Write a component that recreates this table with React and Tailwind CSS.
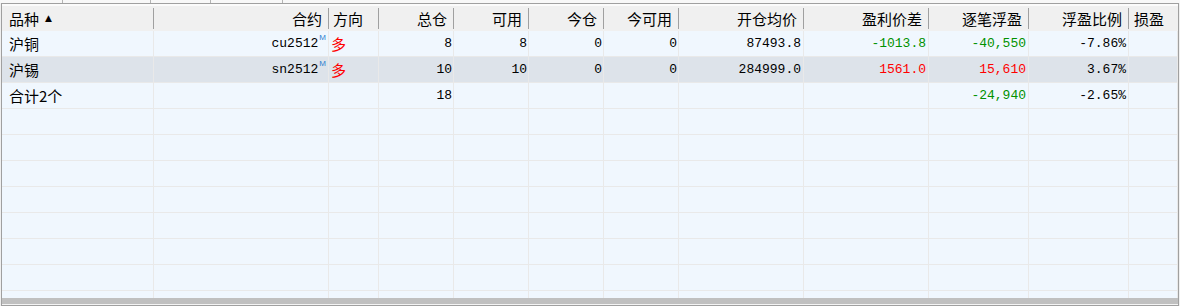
import React from "react";

const cjk = "font-['Microsoft_YaHei','Noto_Sans_CJK_SC',sans-serif]";
const mono = "font-['Liberation_Mono','Noto_Sans_CJK_SC',monospace]";

const cols = [
  { key: "name", label: "品种", w: "w-[152px]", head: "justify-start pl-[7px]", body: "justify-start pl-[7px]" },
  { key: "code", label: "合约", w: "w-[175px]", head: "justify-end pr-[6px]", body: "justify-end pr-[2px]" },
  { key: "dir", label: "方向", w: "w-[50px]", head: "justify-start pl-[4px]", body: "justify-start pl-[2px]" },
  { key: "total", label: "总仓", w: "w-[75px]", head: "justify-end pr-[6px]", body: "justify-end pr-[1px]" },
  { key: "avail", label: "可用", w: "w-[75px]", head: "justify-end pr-[6px]", body: "justify-end pr-[1px]" },
  { key: "today", label: "今仓", w: "w-[75px]", head: "justify-end pr-[6px]", body: "justify-end pr-[1px]" },
  { key: "todayAvail", label: "今可用", w: "w-[75px]", head: "justify-end pr-[6px]", body: "justify-end pr-[1px]" },
  { key: "open", label: "开仓均价", w: "w-[125px]", head: "justify-end pr-[6px]", body: "justify-end pr-[2px]" },
  { key: "diff", label: "盈利价差", w: "w-[125px]", head: "justify-end pr-[6px]", body: "justify-end pr-[2px]" },
  { key: "float", label: "逐笔浮盈", w: "w-[100px]", head: "justify-end pr-[6px]", body: "justify-end pr-[2px]" },
  { key: "ratio", label: "浮盈比例", w: "w-[100px]", head: "justify-end pr-[6px]", body: "justify-end pr-[2px]" },
  { key: "pl", label: "损盈", w: "w-[49px]", head: "justify-start pl-[5px]", body: "justify-start pl-[2px]" },
];

const green = "text-[#009100]";
const red = "text-[#ff0000]";

function Contract({ code }) {
  return (
    <span className="flex items-start">
      <span className={`${mono} text-[13px]`}>{code}</span>
      <span className="font-['Liberation_Sans',sans-serif] text-[8px] leading-none text-[#2f7fd0] -mt-[3px] ml-[1px]">M</span>
    </span>
  );
}

const rows = [
  {
    bg: "bg-[#f0f7fe]",
    cells: {
      name: <span className={`${cjk} text-[15px]`}>沪铜</span>,
      code: <Contract code="cu2512" />,
      dir: <span className={`${cjk} text-[15px] ${red}`}>多</span>,
      total: "8",
      avail: "8",
      today: "0",
      todayAvail: "0",
      open: "87493.8",
      diff: <span className={green}>-1013.8</span>,
      float: <span className={green}>-40,550</span>,
      ratio: "-7.86%",
    },
  },
  {
    bg: "bg-[#dde3ea]",
    cells: {
      name: <span className={`${cjk} text-[15px]`}>沪锡</span>,
      code: <Contract code="sn2512" />,
      dir: <span className={`${cjk} text-[15px] ${red}`}>多</span>,
      total: "10",
      avail: "10",
      today: "0",
      todayAvail: "0",
      open: "284999.0",
      diff: <span className={red}>1561.0</span>,
      float: <span className={red}>15,610</span>,
      ratio: "3.67%",
    },
  },
  {
    bg: "bg-[#f0f7fe]",
    cells: {
      name: <span className={`${cjk} text-[15px]`}>合计2个</span>,
      total: "18",
      float: <span className={green}>-24,940</span>,
      ratio: "-2.65%",
    },
  },
];

const emptyRows = Array.from({ length: 8 }, () => ({ bg: "bg-[#f0f7fe]", cells: {} }));

function Row({ row }) {
  return (
    <div className={`flex h-[26px] shrink-0 border-b border-[#e9e9e9] ${row.bg}`}>
      {cols.map((c) => (
        <div
          key={c.key}
          className={`${c.w} shrink-0 h-full flex items-center border-r border-[#e9e9e9] ${c.body} ${mono} text-[13px] text-black leading-none overflow-hidden whitespace-nowrap`}
        >
          {row.cells[c.key] ?? ""}
        </div>
      ))}
      <div className="flex-1" />
    </div>
  );
}

export default function App() {
  return (
    <div className="w-[1180px] h-[306px] bg-[#f0f0f0] overflow-hidden">
      <div className="h-[3px] flex bg-[#f8f8f8]">
        <div className="w-[63px] border-r border-[#b4b4b4]" />
        <div className="w-[88px] border-r border-[#b4b4b4]" />
        <div className="w-[60px] border-r border-[#b4b4b4]" />
        <div className="w-[72px] border-r border-[#b4b4b4]" />
        <div className="flex-1" />
      </div>
      <div className="ml-[1px] w-[1178px] h-[303px] border border-[#a0a0a0] flex flex-col bg-[#f0f7fe]">
        <div className="h-[27px] shrink-0 flex bg-[#f0f0f0] border-t-2 border-[#fbfbfb]">
          {cols.map((c, i) => (
            <div key={c.key} className={`${c.w} shrink-0 h-full flex items-stretch`}>
              <div className={`flex-1 flex items-center ${c.head} ${cjk} text-[15px] text-black leading-none`}>
                <span>{c.label}</span>
                {c.key === "name" && (
                  <span className="ml-[6px] text-[9px] leading-none font-['DejaVu_Sans',sans-serif]">▲</span>
                )}
              </div>
              {i < cols.length - 1 && <div className="w-px my-[2px] bg-[#a0a0a0]" />}
            </div>
          ))}
          <div className="flex-1" />
        </div>
        <div className="flex-1 flex flex-col overflow-hidden">
          {rows.map((r, i) => (
            <Row key={i} row={r} />
          ))}
          {emptyRows.map((r, i) => (
            <Row key={"e" + i} row={r} />
          ))}
        </div>
        <div className="h-[7px] shrink-0 bg-[#c0c0c0] border-b border-[#f4f4f4]" />
      </div>
    </div>
  );
}
